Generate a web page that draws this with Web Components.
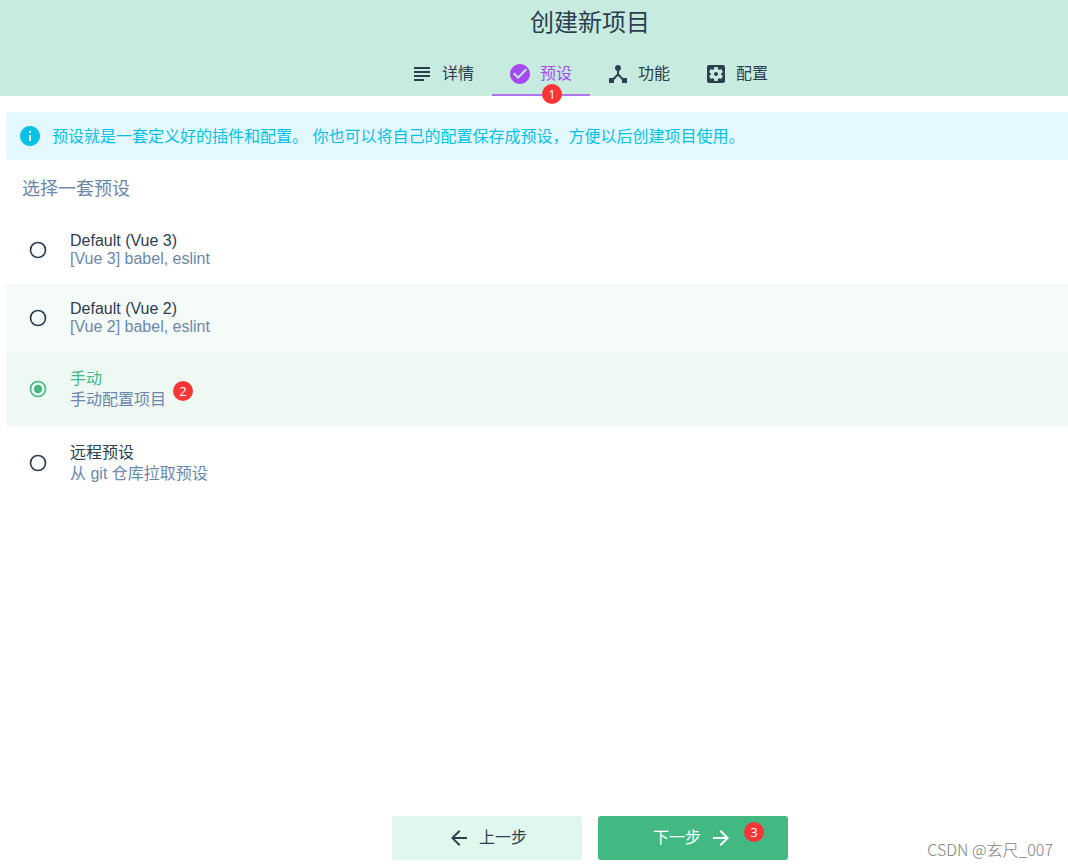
<!DOCTYPE html>
<html lang="zh-CN">
<head>
<meta charset="utf-8">
<meta name="viewport" content="width=device-width, initial-scale=1">
<title>创建新项目</title>
<style>
  html, body { margin: 0; }
  body {
    font: 400 16px/24px "Liberation Sans", "Noto Sans CJK SC", sans-serif;
    color: #2c3e50;
    background: #fff;
  }
</style>
</head>
<body>
<project-create>
  <project-header slot="header">
    创建新项目
    <nav-tab slot="tabs" icon="subject">详情</nav-tab>
    <nav-tab slot="tabs" icon="check" active>预设<step-badge slot="badge">1</step-badge></nav-tab>
    <nav-tab slot="tabs" icon="hub">功能</nav-tab>
    <nav-tab slot="tabs" icon="settings">配置</nav-tab>
  </project-header>
  <info-banner>预设就是一套定义好的插件和配置。 你也可以将自己的配置保存成预设，方便以后创建项目使用。</info-banner>
  <preset-list>
    <span slot="title">选择一套预设</span>
    <preset-option>Default (Vue 3)<span slot="description">[Vue 3] babel, eslint</span></preset-option>
    <preset-option striped>Default (Vue 2)<span slot="description">[Vue 2] babel, eslint</span></preset-option>
    <preset-option tall checked>手动<span slot="description">手动配置项目</span><step-badge slot="badge">2</step-badge></preset-option>
    <preset-option tall>远程预设<span slot="description">从 git 仓库拉取预设</span></preset-option>
  </preset-list>
  <wizard-button slot="actions" before="back">上一步</wizard-button>
  <wizard-button slot="actions" after="forward" primary>下一步<step-badge slot="badge">3</step-badge></wizard-button>
  <span slot="credit">CSDN @玄尺_007</span>
</project-create>

<script>
const ICONS = {
  subject: 'M14 17H4v2h10v-2zm6-8H4v2h16V9zM4 15h16v-2H4v2zM4 5v2h16V5H4z',
  check: 'M12 2C6.48 2 2 6.48 2 12s4.48 10 10 10 10-4.48 10-10S17.52 2 12 2zm-2 15l-5-5 1.41-1.41L10 14.17l7.59-7.59L19 8l-9 9z',
  hub: 'M17 16l-4-4V8.82C14.16 8.4 15 7.3 15 6c0-1.66-1.34-3-3-3S9 4.34 9 6c0 1.3.84 2.4 2 2.82V12l-4 4H3v5h5v-3.05l4-4.2 4 4.2V21h5v-5h-4z',
  settings: 'M12 10c-1.1 0-2 .9-2 2s.9 2 2 2 2-.9 2-2-.9-2-2-2zm7-7H5c-1.11 0-2 .9-2 2v14c0 1.1.89 2 2 2h14c1.11 0 2-.9 2-2V5c0-1.1-.89-2-2-2zm-1.75 9c0 .23-.02.46-.05.68l1.48 1.16c.13.11.17.3.08.45l-1.4 2.42c-.09.15-.27.21-.43.15l-1.74-.7c-.36.28-.76.51-1.18.69l-.26 1.85c-.03.17-.18.3-.35.3h-2.8c-.17 0-.32-.13-.35-.29l-.26-1.85c-.43-.18-.82-.41-1.18-.69l-1.74.7c-.16.06-.34 0-.43-.15l-1.4-2.42c-.09-.15-.05-.34.08-.45l1.48-1.16c-.03-.23-.05-.46-.05-.69 0-.23.02-.46.05-.68l-1.48-1.16c-.13-.11-.17-.3-.08-.45l1.4-2.42c.09-.15.27-.21.43-.15l1.74.7c.36-.28.76-.51 1.18-.69l.26-1.85c.03-.17.18-.3.35-.3h2.8c.17 0 .32.13.35.29l.26 1.85c.43.18.82.41 1.18.69l1.74-.7c.16-.06.34 0 .43.15l1.4 2.42c.09.15.05.34-.08.45l-1.48 1.16c.03.23.05.46.05.69z',
  info: 'M12 2C6.48 2 2 6.48 2 12s4.48 10 10 10 10-4.48 10-10S17.52 2 12 2zm1 15h-2v-6h2v6zm0-8h-2V7h2v2z',
  back: 'M20 11H7.83l5.59-5.59L12 4l-8 8 8 8 1.41-1.41L7.83 13H20v-2z',
  forward: 'M12 4l-1.41 1.41L16.17 11H4v2h12.17l-5.58 5.59L12 20l8-8z'
};
const icon = name => `<svg width="24" height="24" viewBox="0 0 24 24" fill="currentColor" aria-hidden="true"><path d="${ICONS[name]}"/></svg>`;

class Base extends HTMLElement {
  constructor() {
    super();
    this.attachShadow({ mode: 'open' });
  }
  connectedCallback() {
    if (!this.shadowRoot.firstChild) this.shadowRoot.innerHTML = this.template();
  }
}

customElements.define('project-create', class extends Base {
  template() {
    return `<style>
      :host { display: flex; flex-direction: column; min-height: 100vh; position: relative; }
      main { flex: 1; padding: 16px 0 16px 6px; }
      footer { display: flex; justify-content: center; gap: 16px; padding: 0 0 7px 112px; }
      .credit {
        position: absolute; right: 15px; bottom: 6px;
        font: 300 16px/24px "Noto Sans CJK SC", sans-serif; color: #808080;
      }
    </style>
    <slot name="header"></slot>
    <main><slot></slot></main>
    <footer><slot name="actions"></slot></footer>
    <div class="credit"><slot name="credit"></slot></div>`;
  }
});

customElements.define('project-header', class extends Base {
  template() {
    return `<style>
      :host { display: block; background: #c7ebdf; padding-left: 112px; }
      h1 { margin: 0 0 6px; font-size: 24px; line-height: 46px; font-weight: 400; text-align: center; }
      nav { display: flex; justify-content: center; height: 44px; }
    </style>
    <h1><slot></slot></h1>
    <nav><slot name="tabs"></slot></nav>`;
  }
});

customElements.define('nav-tab', class extends Base {
  template() {
    return `<style>
      :host { display: block; position: relative; }
      button {
        display: flex; align-items: center; gap: 8px; height: 100%;
        padding: 0 18px 0 16px; border: 0; background: none;
        font: inherit; color: #2c3e50; cursor: pointer;
      }
      :host([active]) button { color: #a64bf4; box-shadow: inset 0 -2px #b074ee; }
      ::slotted(step-badge) { position: absolute; left: 50px; bottom: -8px; }
    </style>
    <button type="button">${icon(this.getAttribute('icon'))}<span><slot></slot></span></button>
    <slot name="badge"></slot>`;
  }
});

customElements.define('step-badge', class extends Base {
  template() {
    return `<style>
      :host {
        display: block; width: 20px; height: 20px; border-radius: 50%;
        background: #fd3535; color: #fff; text-align: center;
        font: 400 13px/20px "Open Sans", sans-serif;
      }
    </style><slot></slot>`;
  }
});

customElements.define('info-banner', class extends Base {
  template() {
    return `<style>
      :host {
        display: flex; align-items: center; gap: 10px; padding: 11px 12px;
        background: #e4f9ff; color: #03c2e6; border-radius: 3px 0 0 3px;
      }
      svg { flex: none; }
      p { margin: 0; padding-top: 2px; }
    </style>${icon('info')}<p><slot></slot></p>`;
  }
});

customElements.define('preset-list', class extends Base {
  template() {
    return `<style>
      :host { display: block; }
      h2 { margin: 0; padding: 17px 16px 15px; font-size: 18px; line-height: 24px; font-weight: 400; color: #6b88aa; }
    </style>
    <h2><slot name="title"></slot></h2>
    <div role="radiogroup" aria-label="预设"><slot></slot></div>`;
  }
  connectedCallback() {
    super.connectedCallback();
    this.addEventListener('preset-select', e => {
      for (const option of this.querySelectorAll('preset-option')) option.toggleAttribute('checked', option === e.target);
    });
  }
});

customElements.define('preset-option', class extends Base {
  static observedAttributes = ['checked'];
  template() {
    return `<style>
      :host { display: block; line-height: 18px; }
      :host([tall]) { line-height: 21px; }
      :host([striped]) { background: #f5fbf9; }
      :host([checked]) { background: #eef9f4; }
      label { display: flex; align-items: center; gap: 22px; padding: 16px 22px; cursor: pointer; }
      .radio { display: grid; flex: none; width: 20px; height: 20px; }
      .radio > * { grid-area: 1 / 1; margin: 0; width: 20px; height: 20px; }
      input { appearance: none; border-radius: 50%; }
      svg { fill: none; stroke: currentColor; pointer-events: none; }
      .dot { fill: currentColor; stroke: none; visibility: hidden; }
      :host([checked]) .dot { visibility: visible; }
      :host([checked]) .radio, :host([checked]) .name { color: #42b983; }
      .name, .description { display: block; }
      .description { color: #6b88aa; }
      .text { position: relative; }
      ::slotted(step-badge) { position: absolute; left: calc(100% + 7px); bottom: 9px; }
    </style>
    <label>
      <span class="radio">
        <input type="radio" ${this.hasAttribute('checked') ? 'checked' : ''}>
        <svg viewBox="0 0 24 24" aria-hidden="true"><circle cx="12" cy="12" r="9" stroke-width="2"/><circle class="dot" cx="12" cy="12" r="5"/></svg>
      </span>
      <span class="text">
        <span class="name"><slot></slot></span>
        <span class="description"><slot name="description"></slot></span>
        <slot name="badge"></slot>
      </span>
    </label>`;
  }
  connectedCallback() {
    super.connectedCallback();
    this.shadowRoot.querySelector('input').addEventListener('change', () =>
      this.dispatchEvent(new CustomEvent('preset-select', { bubbles: true })));
  }
  attributeChangedCallback() {
    const input = this.shadowRoot.querySelector('input');
    if (input) input.checked = this.hasAttribute('checked');
  }
});

customElements.define('wizard-button', class extends Base {
  template() {
    const before = this.getAttribute('before'), after = this.getAttribute('after');
    return `<style>
      :host { display: block; position: relative; }
      button {
        display: flex; align-items: center; justify-content: center; gap: 8px;
        width: 190px; height: 44px; padding: 0; border: 0; border-radius: 3px;
        font: inherit; color: #2c3e50; background: #e0f7ed; cursor: pointer;
      }
      :host([primary]) button { background: #42b983; color: #fff; }
      ::slotted(step-badge) { position: absolute; right: 24px; top: 6px; }
    </style>
    <button type="button">${before ? icon(before) : ''}<span><slot></slot></span>${after ? icon(after) : ''}</button>
    <slot name="badge"></slot>`;
  }
});
</script>
</body>
</html>
